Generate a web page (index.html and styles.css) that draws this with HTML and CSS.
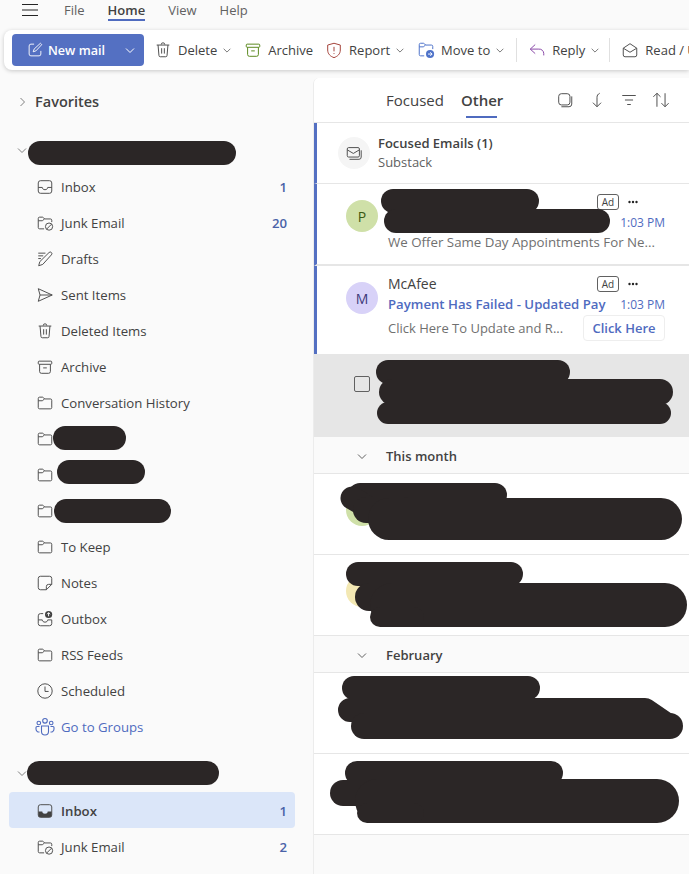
FILE: index.html

```html
<!DOCTYPE html>
<html lang="en">
<head>
  <meta charset="UTF-8" />
  <title>Mail - Outlook</title>
  <link rel="stylesheet" href="styles.css">
</head>
<body>
  <svg class="defs" width="0" height="0">
    <symbol id="folder" viewBox="0 0 20 20"><path d="M2.500 15V5a1.500 1.500 0 0 1 1.500-1.500h3.200c.4 0 .8.200 1 .5L9.500 5.500H16A1.500 1.500 0 0 1 17.500 7v8a1.500 1.500 0 0 1-1.500 1.500H4A1.500 1.500 0 0 1 2.500 15zM2.500 7.500H7l2.500-2"/></symbol>
    <symbol id="chev-down" viewBox="0 0 12 12"><path d="M2 4.500l4 4 4-4"/></symbol>
    <symbol id="trash" viewBox="0 0 20 20"><path d="M8 4a2 2 0 0 1 4 0M3 4.500h14M4.500 4.500l1 11.500A1.500 1.500 0 0 0 7 17.500h6a1.500 1.500 0 0 0 1.500-1.500l1-11.500M8.500 8v6M11.500 8v6"/></symbol>
    <symbol id="archive" viewBox="0 0 20 20"><rect x="2.500" y="3.500" width="15" height="3.500" rx="1"/><path d="M4 7v8a2 2 0 0 0 2 2h8a2 2 0 0 0 2-2V7M8 11h4"/></symbol>
    <symbol id="junk" viewBox="0 0 20 20"><path d="M9 16.500H4A1.500 1.500 0 0 1 2.500 15V5A1.500 1.500 0 0 1 4 3.500h3.200c.4 0 .8.200 1 .5l1.300 1.500H16A1.500 1.500 0 0 1 17.500 7v2M2.500 7.500H7l2.500-2"/><circle cx="14.500" cy="14" r="4"/><path d="M11.800 16.800l5.500-5.500"/></symbol>
  </svg>

  <nav class="menubar">
    <svg class="hamburger" width="16" height="12" viewBox="0 0 16 12"><path d="M0 .5h16M0 6h16M0 11.500h16"/></svg>
    <a class="menu-item">File</a>
    <a class="menu-item active">Home</a>
    <a class="menu-item">View</a>
    <a class="menu-item">Help</a>
  </nav>

  <div class="ribbon">
    <button class="new-mail">
      <svg width="18" height="18" viewBox="0 0 20 20"><path d="M9 3.500H5.500a2 2 0 0 0-2 2v9a2 2 0 0 0 2 2h9a2 2 0 0 0 2-2V11M8 12l1-3 7-6.500L17.500 4 11 11z"/></svg>
      <span class="new-mail-label">New mail</span>
      <svg class="chev" width="12" height="12"><use href="#chev-down"/></svg>
    </button>
    <div class="tool">
      <svg class="ico" width="18" height="18"><use href="#trash"/></svg>
      <span>Delete</span>
      <svg class="chev" width="10" height="10"><use href="#chev-down"/></svg>
    </div>
    <div class="tool">
      <svg class="ico ico-green" width="18" height="18"><use href="#archive"/></svg>
      <span>Archive</span>
    </div>
    <div class="tool">
      <svg class="ico ico-red" width="18" height="18" viewBox="0 0 20 20"><path d="M10 2.500l7 2V10c0 4.500-3 7-7 8.500-4-1.500-7-4-7-8.500V4.500zM10 6.500v5M10 13.500v1"/></svg>
      <span>Report</span>
      <svg class="chev" width="10" height="10"><use href="#chev-down"/></svg>
    </div>
    <div class="tool">
      <svg class="ico ico-blue" width="18" height="18" viewBox="0 0 20 20"><path d="M8 16.500H4A1.500 1.500 0 0 1 2.500 15V4A1.500 1.500 0 0 1 4 2.500h3.200c.4 0 .8.200 1 .5L9.500 4.500H16A1.500 1.500 0 0 1 17.500 6v3M2.500 6.500H7l2.500-2"/><circle class="solid" cx="14.500" cy="14.500" r="4.500"/><path class="cut" d="M12.300 14.500h4.400M14.800 12.500l2 2-2 2"/></svg>
      <span>Move to</span>
      <svg class="chev" width="10" height="10"><use href="#chev-down"/></svg>
    </div>
    <div class="divider"></div>
    <div class="tool tool-tight">
      <svg class="ico ico-purple" width="18" height="18" viewBox="0 0 20 20"><path d="M8 4L2.500 9 8 14M2.500 9H12a5 5 0 0 1 5.500 5v2"/></svg>
      <span>Reply</span>
      <svg class="chev" width="10" height="10"><use href="#chev-down"/></svg>
    </div>
    <div class="divider"></div>
    <div class="tool">
      <svg class="ico" width="18" height="18" viewBox="0 0 20 20"><path d="M2.500 8L10 3l7.500 5v7.500a2 2 0 0 1-2 2h-11a2 2 0 0 1-2-2zM2.500 8l7.500 4.500L17.500 8"/></svg>
      <span>Read / Unread</span>
    </div>
  </div>

  <div class="main">
    <aside class="sidebar">
      <div class="favorites">
        <svg class="side-chev" width="12" height="12" viewBox="0 0 12 12"><path d="M4.500 2l4 4-4 4"/></svg>
        <span>Favorites</span>
      </div>

      <div class="account">
        <svg class="side-chev" width="12" height="12"><use href="#chev-down"/></svg>
        <span class="pill pill-account-one"></span>
      </div>
      <a class="folder">
        <svg class="ico" width="18" height="18" viewBox="0 0 20 20"><rect x="2.500" y="3" width="15" height="14" rx="2.500"/><path d="M2.500 10.500H7c0 1.500 1.300 2.500 3 2.500s3-1 3-2.500h4.500"/></svg>
        <span class="folder-name">Inbox</span><span class="count">1</span>
      </a>
      <a class="folder">
        <svg class="ico" width="18" height="18"><use href="#junk"/></svg>
        <span class="folder-name">Junk Email</span><span class="count">20</span>
      </a>
      <a class="folder">
        <svg class="ico" width="18" height="18" viewBox="0 0 20 20"><path d="M2.500 3.500h8M2.500 6.500h5.500M2.500 9.500h3M3 17.500l1.200-4.500L14.500 2.800a1.800 1.800 0 0 1 2.600 2.600L7.500 16z"/></svg>
        <span class="folder-name">Drafts</span>
      </a>
      <a class="folder">
        <svg class="ico" width="18" height="18" viewBox="0 0 20 20"><path d="M2.500 3l15.500 7-15.500 7L4.500 10zM4.500 10H18"/></svg>
        <span class="folder-name">Sent Items</span>
      </a>
      <a class="folder">
        <svg class="ico" width="18" height="18"><use href="#trash"/></svg>
        <span class="folder-name">Deleted Items</span>
      </a>
      <a class="folder">
        <svg class="ico" width="18" height="18"><use href="#archive"/></svg>
        <span class="folder-name">Archive</span>
      </a>
      <a class="folder">
        <svg class="ico" width="18" height="18"><use href="#folder"/></svg>
        <span class="folder-name">Conversation History</span>
      </a>
      <a class="folder">
        <svg class="ico" width="18" height="18"><use href="#folder"/></svg>
        <span class="pill pill-folder-one"></span>
      </a>
      <a class="folder">
        <svg class="ico" width="18" height="18"><use href="#folder"/></svg>
        <span class="pill pill-folder-two"></span>
      </a>
      <a class="folder">
        <svg class="ico" width="18" height="18"><use href="#folder"/></svg>
        <span class="pill pill-folder-three"></span>
      </a>
      <a class="folder">
        <svg class="ico" width="18" height="18"><use href="#folder"/></svg>
        <span class="folder-name">To Keep</span>
      </a>
      <a class="folder">
        <svg class="ico" width="18" height="18" viewBox="0 0 20 20"><path d="M11.500 17.500H5A2.500 2.500 0 0 1 2.500 15V5A2.500 2.500 0 0 1 5 2.500h10A2.500 2.500 0 0 1 17.500 5v6.500zM17.500 11.500H14a2.500 2.500 0 0 0-2.500 2.500v3.500"/></svg>
        <span class="folder-name">Notes</span>
      </a>
      <a class="folder">
        <svg class="ico" width="18" height="18" viewBox="0 0 20 20"><path d="M8 4H5a2.500 2.500 0 0 0-2.500 2.500V15A2.500 2.500 0 0 0 5 17.500h10a2.500 2.500 0 0 0 2.500-2.500v-4M2.500 11H7c0 1.500 1.300 2.500 3 2.500s3-1 3-2.500h4.500"/><circle class="solid" cx="14" cy="5" r="4"/><path class="cut" d="M14 7V3M12.300 4.700L14 3l1.700 1.700"/></svg>
        <span class="folder-name">Outbox</span>
      </a>
      <a class="folder">
        <svg class="ico" width="18" height="18"><use href="#folder"/></svg>
        <span class="folder-name">RSS Feeds</span>
      </a>
      <a class="folder">
        <svg class="ico" width="18" height="18" viewBox="0 0 20 20"><circle cx="10" cy="10" r="8"/><path d="M10 5v5.500h4"/></svg>
        <span class="folder-name">Scheduled</span>
      </a>
      <a class="folder folder-link">
        <svg class="ico ico-link" width="20" height="20" viewBox="0 0 20 20"><circle cx="10" cy="3.800" r="2.300"/><circle cx="3.800" cy="6" r="1.800"/><circle cx="16.200" cy="6" r="1.800"/><path d="M6.500 9h7v5.500a3.500 3.500 0 0 1-7 0zM4.500 9.500H2a1 1 0 0 0-1 1V12a3 3 0 0 0 3.500 3M15.500 9.500H18a1 1 0 0 1 1 1V12a3 3 0 0 1-3.500 3"/></svg>
        <span class="folder-name">Go to Groups</span>
      </a>

      <div class="account account-next">
        <svg class="side-chev" width="12" height="12"><use href="#chev-down"/></svg>
        <span class="pill pill-account-two"></span>
      </div>
      <a class="folder selected">
        <svg class="ico" width="18" height="18" viewBox="0 0 20 20"><path class="solid" d="M2.500 10.500H7c0 1.500 1.300 2.500 3 2.500s3-1 3-2.500h4.500V15a2 2 0 0 1-2 2h-11a2 2 0 0 1-2-2z"/><rect x="2.500" y="3" width="15" height="14" rx="2.500"/></svg>
        <span class="folder-name">Inbox</span><span class="count">1</span>
      </a>
      <a class="folder">
        <svg class="ico" width="18" height="18"><use href="#junk"/></svg>
        <span class="folder-name">Junk Email</span><span class="count">2</span>
      </a>
    </aside>

    <section class="list">
      <header class="list-head">
        <div class="tabs">
          <span class="tab">Focused</span>
          <span class="tab tab-on">Other</span>
        </div>
        <div class="list-actions">
          <svg class="ico" width="18" height="18" viewBox="0 0 20 20"><rect x="3" y="3" width="12.500" height="12.500" rx="3"/><path d="M17.500 6v8.500a3 3 0 0 1-3 3H6"/></svg>
          <svg class="ico" width="18" height="18" viewBox="0 0 20 20"><path d="M13 2.500c-2 1-3 2.500-3 4.500v10.500M5.500 13l4.500 4.500 4.500-4.500"/></svg>
          <svg class="ico" width="18" height="18" viewBox="0 0 20 20"><path d="M2.500 5h15M5.500 10h9M8 15h4"/></svg>
          <svg class="ico" width="18" height="18" viewBox="0 0 20 20"><path d="M5.500 17.500v-15M1.500 6.500l4-4 4 4M14.500 2.500v15M10.500 13.500l4 4 4-4"/></svg>
        </div>
      </header>

      <div class="msg msg-digest msg-unread">
        <div class="digest-icon">
          <svg class="ico" width="18" height="18" viewBox="0 0 20 20"><rect x="2.500" y="4" width="13.500" height="10.500" rx="1.500"/><path d="M2.500 6.500l6.750 4 6.750-4M18 7v7.500a2.500 2.500 0 0 1-2.500 2.500H5"/></svg>
        </div>
        <div class="digest-text">
          <div class="digest-title">Focused Emails (1)</div>
          <div class="digest-sub">Substack</div>
        </div>
      </div>

      <div class="msg msg-ad msg-unread">
        <div class="avatar avatar-green">P</div>
        <div class="msg-body">
          <div class="msg-line msg-top"><span class="ad">Ad</span><svg class="dots" width="10" height="4"><circle cx="1.500" cy="2" r="1.200"/><circle cx="5" cy="2" r="1.200"/><circle cx="8.500" cy="2" r="1.200"/></svg></div>
          <div class="msg-line msg-mid"><span class="time">1:03 PM</span></div>
          <div class="msg-line msg-preview"><span class="preview">We Offer Same Day Appointments For Ne...</span></div>
        </div>
        <svg class="scribble"><path stroke-width="24" d="M76 17H210"/><path stroke-width="24" d="M79 37H281"/></svg>
      </div>

      <div class="msg msg-ad msg-ad-tall msg-unread">
        <div class="avatar avatar-purple">M</div>
        <div class="msg-body">
          <div class="msg-line msg-top"><span class="sender">McAfee</span><span class="ad">Ad</span><svg class="dots" width="10" height="4"><circle cx="1.500" cy="2" r="1.200"/><circle cx="5" cy="2" r="1.200"/><circle cx="8.500" cy="2" r="1.200"/></svg></div>
          <div class="msg-line msg-mid"><span class="subject">Payment Has Failed - Updated Pay</span><span class="time">1:03 PM</span></div>
          <div class="msg-line msg-cta"><span class="preview">Click Here To Update and R...</span><span class="cta">Click Here</span></div>
        </div>
      </div>

      <div class="msg msg-hover">
        <span class="checkbox"></span>
        <svg class="scribble"><path stroke-width="24" d="M74 18H244"/><path stroke-width="26" d="M78 38H346"/><path stroke-width="22" d="M74 59H346"/></svg>
      </div>

      <div class="group">
        <svg class="group-chev" width="12" height="12"><use href="#chev-down"/></svg>
        <span>This month</span>
      </div>

      <div class="msg msg-plain">
        <div class="avatar avatar-green"></div>
        <svg class="scribble"><path stroke-width="24" d="M46 21H181"/><path stroke-width="23" d="M38 24L50 31"/><path stroke-width="26" d="M52 36H90"/><path stroke-width="42" d="M75 45H347"/></svg>
      </div>
      <div class="msg msg-plain">
        <div class="avatar avatar-yellow"></div>
        <svg class="scribble"><path stroke-width="24" d="M44 19H197"/><path stroke-width="28" d="M55 42H86"/><path stroke-width="44" d="M78 50H351"/><path stroke-width="20" d="M66 62H100"/></svg>
      </div>

      <div class="group">
        <svg class="group-chev" width="12" height="12"><use href="#chev-down"/></svg>
        <span>February</span>
      </div>

      <div class="msg msg-plain">
        <svg class="scribble"><path stroke-width="24" d="M40 15H214"/><path stroke-width="24" d="M36 37H331L350 50"/><path stroke-width="26" d="M50 53H356"/></svg>
      </div>
      <div class="msg msg-plain">
        <svg class="scribble"><path stroke-width="24" d="M43 19H237"/><path stroke-width="26" d="M29 39H86"/><path stroke-width="44" d="M63 47H343"/><path stroke-width="20" d="M53 59H100"/></svg>
      </div>
    </section>
  </div>
</body>
</html>
```

FILE: styles.css

```css
* {
  box-sizing: border-box;
}
body {
  margin: 0;
  height: 874px;
  overflow: hidden;
  background-color: #fafafa;
  font-family: "Open Sans", "Noto Sans", sans-serif;
  font-size: 13px;
  color: #424242;
}
svg {
  display: block;
  flex: none;
}
.defs {
  position: absolute;
}

/* top menu */
.menubar {
  display: flex;
  align-items: center;
  height: 30px;
  padding: 0 0 10px 22px;
  color: #616161;
}
.hamburger {
  margin-right: 26px;
  fill: none;
  stroke: #242424;
}
.menu-item {
  position: relative;
  margin-right: 23px;
}
.menu-item.active {
  color: #424242;
  font-weight: 600;
}
.menu-item.active::after {
  content: "";
  position: absolute;
  left: 0;
  right: 0;
  top: 18px;
  height: 2px;
  background-color: #4f6bbf;
}

/* ribbon */
.ribbon {
  display: flex;
  align-items: center;
  height: 40px;
  margin-left: 4px;
  padding-left: 8px;
  background-color: white;
  border-radius: 8px 0 0 8px;
  box-shadow: 0 1px 4px rgba(0, 0, 0, 0.2);
  white-space: nowrap;
  overflow: hidden;
}
.new-mail {
  display: flex;
  align-items: center;
  flex: none;
  width: 132px;
  height: 32px;
  margin-right: 10px;
  padding: 0 8px 0 14px;
  background-color: #5470c2;
  border: none;
  border-radius: 4px;
  color: white;
  font: inherit;
  font-size: 12.600px;
  font-weight: 600;
}
.new-mail svg {
  fill: none;
  stroke: white;
}
.new-mail-label {
  margin-left: 4px;
  flex: 1;
  text-align: left;
}
.tool {
  display: flex;
  align-items: center;
  flex: none;
  margin-right: 12px;
}
.tool-tight {
  margin-right: 10px;
}
.tool .ico {
  margin-right: 6px;
}
.chev {
  margin-left: 5px;
  fill: none;
  stroke: #616161;
}
.divider {
  flex: none;
  width: 1px;
  height: 24px;
  margin: 0 11px 0 -1px;
  background-color: #e0e0e0;
}
.ico {
  fill: none;
  stroke: #505050;
  stroke-width: 1.100;
}
.ico .solid {
  fill: #424242;
  stroke: none;
}
.ico .cut {
  stroke: white;
}
.ico-green {
  stroke: #5b8a1e;
}
.ico-red {
  stroke: #a4423a;
}
.ico-blue {
  stroke: #4f73c9;
}
.ico-blue .solid {
  fill: #4f73c9;
}
.ico-purple {
  stroke: #8a4aa8;
}
.ico-link {
  stroke: #4f6bbf;
}

/* main area */
.main {
  display: flex;
  height: 804px;
  margin-top: 8px;
}
.sidebar {
  flex: none;
  width: 313px;
  padding-top: 6px;
}
.side-chev {
  position: absolute;
  left: 16px;
  top: 10px;
  fill: none;
  stroke: #808080;
}
.favorites {
  position: relative;
  height: 35px;
  display: flex;
  align-items: center;
  padding-left: 35px;
  font-size: 14.500px;
  font-weight: 600;
}
.favorites .side-chev {
  top: 12px;
}
.account {
  position: relative;
  height: 35px;
  margin-top: 15px;
  padding: 7px 0 0 28px;
}
.account-next {
  height: 37px;
  margin-top: 10px;
  padding: 6px 0 0 27px;
}
.account-next .side-chev {
  top: 12px;
}
.pill {
  display: block;
  flex: none;
  height: 24px;
  background-color: #2b2626;
  border-radius: 12px;
}
.pill-account-one {
  width: 208px;
}
.pill-account-two {
  width: 192px;
}
.pill-folder-one {
  width: 73px;
  margin: -2px 0 0 -8px;
}
.pill-folder-two {
  width: 88px;
  margin: -6px 0 0 -4px;
}
.pill-folder-three {
  width: 117px;
  margin: -1px 0 0 -7px;
}
.folder {
  display: flex;
  align-items: center;
  gap: 7px;
  height: 36px;
  margin: 0 18px 0 9px;
  padding: 0 8px 0 27px;
  border-radius: 4px;
  font-size: 13.200px;
}
.folder-name {
  flex: 1;
}
.count {
  color: #4a62a8;
  font-weight: 600;
}
.folder-link {
  color: #4f6bbf;
  gap: 6px;
  padding-left: 26px;
}
.selected {
  background-color: #dbe6f9;
  font-weight: 600;
}
.selected,
.selected + .folder {
  padding-top: 2px;
}

/* message list */
.list {
  flex: 1;
  min-width: 0;
  border-left: 1px solid #ececec;
  border-top-left-radius: 6px;
  overflow: hidden;
}
.list-head {
  display: flex;
  align-items: center;
  height: 45px;
  padding: 0 19px 0 72px;
  background-color: white;
  border-bottom: 1px solid #e6e6e6;
}
.tabs {
  display: flex;
  gap: 17px;
  font-size: 15px;
}
.tab {
  position: relative;
}
.tab-on {
  font-weight: 600;
}
.tab-on::after {
  content: "";
  position: absolute;
  left: 5px;
  right: 6px;
  top: 26px;
  height: 2px;
  background-color: #4f6bbf;
}
.list-actions {
  display: flex;
  gap: 14px;
  margin-left: auto;
}
.msg {
  position: relative;
  display: flex;
  background-color: white;
  border-bottom: 1px solid #e6e6e6;
}
.msg-unread {
  border-left: 3px solid #5470c2;
}
.msg-digest {
  align-items: center;
  height: 61px;
  padding-left: 21px;
}
.digest-icon {
  display: flex;
  align-items: center;
  justify-content: center;
  width: 32px;
  height: 32px;
  margin-right: 8px;
  background-color: #f5f5f5;
  border-radius: 50%;
}
.digest-text {
  margin-top: -2px;
}
.digest-title {
  font-weight: 600;
  line-height: 20px;
}
.digest-sub {
  color: #616161;
  line-height: 19px;
}
.msg-ad {
  height: 82px;
  padding: 8px 24px 0 29px;
  border-bottom-width: 2px;
}
.msg-ad-tall {
  height: 88px;
  border-bottom: none;
}
.avatar {
  flex: none;
  display: flex;
  align-items: center;
  justify-content: center;
  width: 32px;
  height: 32px;
  margin: 8px 10px 0 0;
  border-radius: 50%;
  font-size: 14px;
}
.avatar-green {
  background-color: #cfe0a8;
  color: #3b5a12;
}
.avatar-purple {
  background-color: #d8d2f8;
  color: #3f3a7a;
}
.avatar-yellow {
  background-color: #f3e8b3;
}
.msg-body {
  flex: 1;
  min-width: 0;
}
.msg-line {
  display: flex;
  align-items: center;
  height: 20px;
  white-space: nowrap;
}
.msg-top {
  justify-content: flex-end;
  padding-right: 27px;
}
.sender {
  margin: -2px auto 0 0;
  font-size: 14px;
}
.ad {
  display: flex;
  align-items: center;
  justify-content: center;
  width: 22px;
  height: 16px;
  margin-right: 9px;
  border: 1px solid #616161;
  border-radius: 3px;
  font-size: 10px;
}
.dots {
  fill: #242424;
}
.msg-mid {
  justify-content: flex-end;
  gap: 8px;
}
.subject {
  flex: 1;
  min-width: 0;
  color: #4f6bbf;
  font-size: 13.200px;
  font-weight: 600;
}
.time {
  flex: none;
  font-size: 12px;
  color: #4f6bbf;
}
.preview {
  color: #707070;
}
.msg-preview .preview {
  font-size: 13.300px;
}
.msg-cta {
  height: 26px;
  margin-top: 1px;
  justify-content: space-between;
}
.cta {
  flex: none;
  width: 82px;
  height: 26px;
  line-height: 24px;
  text-align: center;
  color: #4f6bbf;
  font-weight: 600;
  border: 1px solid #eeeeee;
  border-radius: 4px;
}
.msg-hover {
  height: 83px;
  background-color: #e6e6e6;
  border-bottom: none;
}
.checkbox {
  width: 16px;
  height: 16px;
  margin: 22px 0 0 40px;
  border: 1px solid #616161;
  border-radius: 2px;
}
.group {
  display: flex;
  align-items: center;
  height: 37px;
  padding: 2px 0 0 42px;
  background-color: #fafafa;
  border-bottom: 1px solid #e6e6e6;
  font-weight: 600;
}
.group-chev {
  margin-right: 18px;
  fill: none;
  stroke: #616161;
}
.msg-plain {
  height: 81px;
  padding: 12px 0 0 32px;
}

/* redacted content drawn over the rows */
.scribble {
  position: absolute;
  left: 0;
  top: 0;
  width: 100%;
  height: 100%;
  fill: none;
  stroke: #2b2626;
  stroke-linecap: round;
  stroke-linejoin: round;
}
```
